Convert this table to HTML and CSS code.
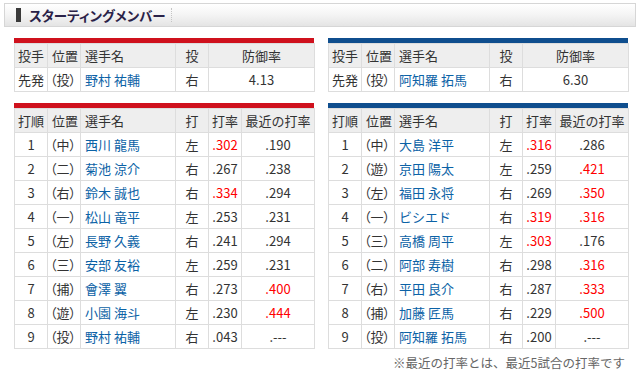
FILE: index.html
```html
<!DOCTYPE html>
<html lang="ja">
<head>
<meta charset="utf-8">
<link rel="stylesheet" href="styles.css">
</head>
<body>
<div class="page">
  <div class="title-bar">
    <span class="mark"></span>
    <span class="title">スターティングメンバー</span>
    <span class="sep"></span>
  </div>

  <div class="pair">
    <div class="tbl red">
      <table>
        <colgroup><col class="c1"><col class="c2"><col class="c3"><col class="c4"><col class="c5w"></colgroup>
        <tr class="hd"><th>投手</th><th class="l">位置</th><th class="l">選手名</th><th>投</th><th>防御率</th></tr>
        <tr><td>先発</td><td class="l pos">（投）</td><td class="l name">野村 祐輔</td><td>右</td><td>4.13</td></tr>
      </table>
    </div>
    <div class="tbl blue">
      <table>
        <colgroup><col class="c1"><col class="c2"><col class="c3"><col class="c4"><col class="c5w"></colgroup>
        <tr class="hd"><th>投手</th><th class="l">位置</th><th class="l">選手名</th><th>投</th><th>防御率</th></tr>
        <tr><td>先発</td><td class="l pos">（投）</td><td class="l name">阿知羅 拓馬</td><td>右</td><td>6.30</td></tr>
      </table>
    </div>
  </div>

  <div class="pair">
    <div class="tbl red">
      <table>
        <colgroup><col class="c1"><col class="c2"><col class="c3"><col class="c4"><col class="c5"><col class="c6"></colgroup>
        <tr class="hd"><th>打順</th><th class="l">位置</th><th class="l">選手名</th><th>打</th><th>打率</th><th>最近の打率</th></tr>
        <tr><td>1</td><td class="l pos">（中）</td><td class="l name">西川 龍馬</td><td>左</td><td class="hot">.302</td><td>.190</td></tr>
        <tr><td>2</td><td class="l pos">（二）</td><td class="l name">菊池 涼介</td><td>右</td><td>.267</td><td>.238</td></tr>
        <tr><td>3</td><td class="l pos">（右）</td><td class="l name">鈴木 誠也</td><td>右</td><td class="hot">.334</td><td>.294</td></tr>
        <tr><td>4</td><td class="l pos">（一）</td><td class="l name">松山 竜平</td><td>左</td><td>.253</td><td>.231</td></tr>
        <tr><td>5</td><td class="l pos">（左）</td><td class="l name">長野 久義</td><td>右</td><td>.241</td><td>.294</td></tr>
        <tr><td>6</td><td class="l pos">（三）</td><td class="l name">安部 友裕</td><td>左</td><td>.259</td><td>.231</td></tr>
        <tr><td>7</td><td class="l pos">（捕）</td><td class="l name">會澤 翼</td><td>右</td><td>.273</td><td class="hot">.400</td></tr>
        <tr><td>8</td><td class="l pos">（遊）</td><td class="l name">小園 海斗</td><td>左</td><td>.230</td><td class="hot">.444</td></tr>
        <tr><td>9</td><td class="l pos">（投）</td><td class="l name">野村 祐輔</td><td>右</td><td>.043</td><td>.---</td></tr>
      </table>
    </div>
    <div class="tbl blue">
      <table>
        <colgroup><col class="c1"><col class="c2"><col class="c3"><col class="c4"><col class="c5"><col class="c6"></colgroup>
        <tr class="hd"><th>打順</th><th class="l">位置</th><th class="l">選手名</th><th>打</th><th>打率</th><th>最近の打率</th></tr>
        <tr><td>1</td><td class="l pos">（中）</td><td class="l name">大島 洋平</td><td>左</td><td class="hot">.316</td><td>.286</td></tr>
        <tr><td>2</td><td class="l pos">（遊）</td><td class="l name">京田 陽太</td><td>左</td><td>.259</td><td class="hot">.421</td></tr>
        <tr><td>3</td><td class="l pos">（左）</td><td class="l name">福田 永将</td><td>右</td><td>.269</td><td class="hot">.350</td></tr>
        <tr><td>4</td><td class="l pos">（一）</td><td class="l name">ビシエド</td><td>右</td><td class="hot">.319</td><td class="hot">.316</td></tr>
        <tr><td>5</td><td class="l pos">（三）</td><td class="l name">高橋 周平</td><td>左</td><td class="hot">.303</td><td>.176</td></tr>
        <tr><td>6</td><td class="l pos">（二）</td><td class="l name">阿部 寿樹</td><td>右</td><td>.298</td><td class="hot">.316</td></tr>
        <tr><td>7</td><td class="l pos">（右）</td><td class="l name">平田 良介</td><td>右</td><td>.287</td><td class="hot">.333</td></tr>
        <tr><td>8</td><td class="l pos">（捕）</td><td class="l name">加藤 匠馬</td><td>右</td><td>.229</td><td class="hot">.500</td></tr>
        <tr><td>9</td><td class="l pos">（投）</td><td class="l name">阿知羅 拓馬</td><td>右</td><td>.200</td><td>.---</td></tr>
      </table>
    </div>
  </div>

  <p class="note">※最近の打率とは、最近5試合の打率です</p>
</div>
</body>
</html>
```

FILE: styles.css
```css
html, body {
  margin: 0;
  padding: 0;
  background: #ffffff;
}
body {
  font-family: "Noto Sans CJK JP", "Noto Sans", sans-serif;
  color: #333333;
}
.page {
  padding: 3px 4px 0;
}
.title-bar {
  height: 22px;
  border: 1px solid #d6d6d6;
  background: linear-gradient(#ffffff 0%, #f4f4f4 50%, #e4e4e4 100%);
  display: flex;
  align-items: center;
  padding-left: 11px;
}
.mark {
  width: 5px;
  height: 14px;
  background: #3a3a3a;
  margin-right: 8px;
}
.title {
  font-size: 13.5px;
  font-weight: bold;
  color: #2a2248;
  line-height: 16px;
  font-feature-settings: "palt";
}
.sep {
  width: 0;
  height: 14px;
  border-left: 1px dotted #c4c4c4;
  margin-left: 5px;
}
.pair {
  display: flex;
  gap: 14px;
  padding: 0 10px;
  margin-top: 11px;
}
.tbl {
  width: 300px;
  border-top: 5px solid #cf111d;
}
.tbl.blue {
  border-top-color: #0f4e8e;
}
table {
  width: 300px;
  border-collapse: collapse;
  table-layout: fixed;
}
.c1, .c2, .c4, .c5 { width: 33px; }
.c3 { width: 95px; }
.c5w { width: 106px; }
.c6 { width: 73px; }
th, td {
  border: 1px solid #dddddd;
  height: 23px;
  padding: 0;
  font-size: 13px;
  font-weight: normal;
  line-height: 15px;
  text-align: center;
  vertical-align: middle;
  white-space: nowrap;
  overflow: hidden;
}
th {
  background: #eeeeee;
}
.l {
  text-align: left;
  padding-left: 4px;
}
.pos {
  padding-left: 2px;
  font-feature-settings: "palt";
}
.name {
  color: #0b62a6;
}
.hot {
  color: #ff0000;
}
.note {
  margin: 6px 0 0;
  padding-right: 11px;
  text-align: right;
  font-size: 12.5px;
  line-height: 15px;
  color: #666666;
}
```
